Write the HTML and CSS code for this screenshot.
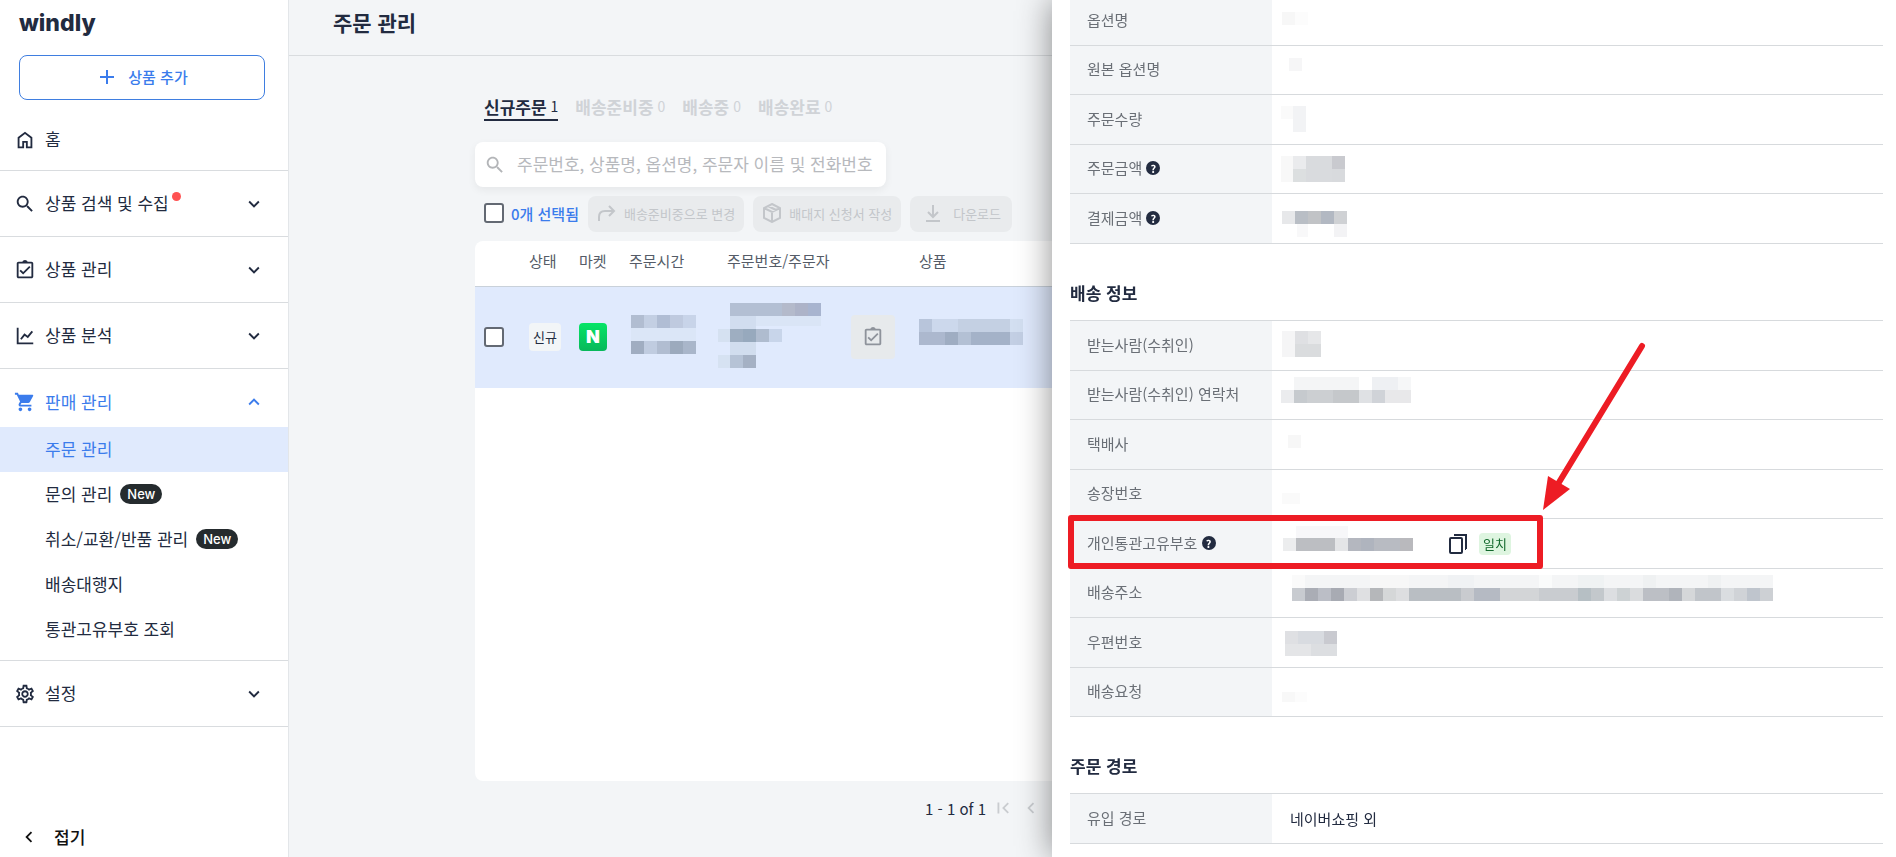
FILE: index.html
```html
<!DOCTYPE html>
<html lang="ko">
<head>
  <meta charset="UTF-8" />
  <meta name="viewport" content="width=device-width, initial-scale=1.0" />
  <title>주문 관리 - windly</title>
  <link rel="stylesheet" href="styles.css">
</head>
<body>
  <!-- Shared icons -->
  <svg class="sprite" aria-hidden="true">
    <symbol id="i-down" viewBox="0 0 24 24"><path d="M16.59 8.59 12 13.17 7.41 8.59 6 10l6 6 6-6z"/></symbol>
    <symbol id="i-search" viewBox="0 0 24 24"><path d="M15.5 14h-.79l-.28-.27C15.41 12.59 16 11.11 16 9.5 16 5.91 13.09 3 9.5 3S3 5.91 3 9.5 5.91 16 9.5 16c1.61 0 3.09-.59 4.23-1.57l.27.28v.79l5 4.99L20.49 19l-4.99-5zm-6 0C7.01 14 5 11.99 5 9.5S7.01 5 9.5 5 14 7.01 14 9.5 11.99 14 9.5 14z"/></symbol>
    <symbol id="i-clip" viewBox="0 0 24 24"><path d="M19 3h-4.18C14.4 1.84 13.3 1 12 1s-2.4.84-2.82 2H5c-1.1 0-2 .9-2 2v14c0 1.1.9 2 2 2h14c1.1 0 2-.9 2-2V5c0-1.1-.9-2-2-2zm0 16H5V5h14v14zM17.99 9l-1.41-1.42-6.59 6.59-2.58-2.57-1.42 1.41 4 3.99z"/></symbol>
    <symbol id="i-left" viewBox="0 0 24 24"><path d="M15.41 7.41 14 6l-6 6 6 6 1.41-1.41L10.83 12z"/></symbol>
  </svg>

  <div class="layout">
    <aside class="sidebar">
      <a class="logo" href="#">windly</a>
      <button class="add-btn" type="button">
        <svg viewBox="0 0 14 14"><path d="M7 0v14M0 7h14"/></svg>
        상품 추가
      </button>

      <nav class="nav">
        <div class="nav-section home">
          <a class="nav-item" href="#">
            <svg class="icon" viewBox="0 0 24 24"><path d="M6 19h3v-6h6v6h3v-9l-6-4.5L6 10v9zm-2 2V9l8-6 8 6v12h-7v-6h-2v6H4z"/></svg>
            <span>홈</span>
          </a>
        </div>
        <div class="nav-section">
          <button class="nav-item" type="button">
            <svg class="icon"><use href="#i-search"/></svg>
            <span class="dot">상품 검색 및 수집</span>
            <svg class="icon arrow"><use href="#i-down"/></svg>
          </button>
        </div>
        <div class="nav-section">
          <button class="nav-item" type="button">
            <svg class="icon"><use href="#i-clip"/></svg>
            <span>상품 관리</span>
            <svg class="icon arrow"><use href="#i-down"/></svg>
          </button>
        </div>
        <div class="nav-section">
          <button class="nav-item" type="button">
            <svg class="icon line" viewBox="0 0 24 24"><path d="M4 3v17h17M7.500 15.500l4-5 3.500 2.500 5-6"/></svg>
            <span>상품 분석</span>
            <svg class="icon arrow"><use href="#i-down"/></svg>
          </button>
        </div>
        <div class="nav-section">
          <button class="nav-item open" type="button">
            <svg class="icon" viewBox="0 0 24 24"><path d="M7 18c-1.100 0-1.990.9-1.990 2S5.900 22 7 22s2-.9 2-2-.9-2-2-2zM1 2v2h2l3.600 7.590-1.350 2.450c-.16.28-.25.61-.25.96 0 1.100.9 2 2 2h12v-2H7.420c-.14 0-.25-.11-.25-.25l.03-.12.9-1.630h7.450c.75 0 1.410-.41 1.750-1.030l3.580-6.490c.08-.14.12-.31.12-.48 0-.55-.45-1-1-1H5.210l-.94-2H1zm16 16c-1.100 0-1.990.9-1.990 2s.89 2 1.990 2 2-.9 2-2-.9-2-2-2z"/></svg>
            <span>판매 관리</span>
            <svg class="icon arrow" viewBox="0 0 24 24"><path d="m12 8-6 6 1.410 1.410L12 10.830l4.590 4.580L18 14z"/></svg>
          </button>
          <ul class="submenu">
            <li><a class="active" href="#">주문 관리</a></li>
            <li><a href="#">문의 관리 <span class="new">New</span></a></li>
            <li><a href="#">취소/교환/반품 관리 <span class="new">New</span></a></li>
            <li><a href="#">배송대행지</a></li>
            <li><a href="#">통관고유부호 조회</a></li>
          </ul>
        </div>
        <div class="nav-section">
          <button class="nav-item" type="button">
            <svg class="icon" viewBox="0 0 24 24"><path d="M19.43 12.98c.04-.32.07-.64.07-.98 0-.34-.03-.66-.07-.98l2.110-1.650c.19-.15.24-.42.12-.64l-2-3.460c-.09-.16-.26-.25-.44-.25-.06 0-.12.01-.17.03l-2.490 1c-.52-.4-1.080-.73-1.690-.98l-.38-2.650C14.46 2.180 14.25 2 14 2h-4c-.25 0-.46.18-.49.42l-.38 2.650c-.61.25-1.170.59-1.690.98l-2.490-1c-.06-.02-.12-.03-.18-.03-.17 0-.34.09-.43.25l-2 3.460c-.13.22-.07.49.12.64l2.110 1.650c-.04.32-.07.65-.07.98 0 .33.03.66.07.98l-2.110 1.650c-.19.15-.24.42-.12.64l2 3.460c.09.16.26.25.44.25.06 0 .12-.01.17-.03l2.490-1c.52.4 1.080.73 1.690.98l.38 2.650c.03.24.24.42.49.42h4c.25 0 .46-.18.49-.42l.38-2.650c.61-.25 1.170-.59 1.690-.98l2.490 1c.06.02.12.03.18.03.17 0 .34-.09.43-.25l2-3.460c.12-.22.07-.49-.12-.64l-2.110-1.650zm-1.980-1.710c.04.31.05.52.05.73 0 .21-.02.43-.05.73l-.14 1.130.89.7 1.080.84-.7 1.210-1.270-.51-1.040-.42-.9.68c-.43.32-.84.56-1.250.73l-1.060.43-.16 1.130-.2 1.350h-1.400l-.19-1.350-.16-1.130-1.060-.43c-.43-.18-.83-.41-1.230-.71l-.91-.7-1.060.43-1.270.51-.7-1.210 1.080-.84.89-.7-.14-1.130c-.03-.31-.05-.54-.05-.74s.02-.43.05-.73l.14-1.130-.89-.7-1.080-.84.7-1.210 1.270.51 1.040.42.9-.68c.43-.32.84-.56 1.250-.73l1.060-.43.16-1.130.2-1.350h1.390l.19 1.350.16 1.130 1.060.43c.43.18.83.41 1.230.71l.91.7 1.060-.43 1.270-.51.7 1.210-1.070.85-.89.7.14 1.130zM12 8c-2.210 0-4 1.790-4 4s1.790 4 4 4 4-1.790 4-4-1.790-4-4-4zm0 6c-1.100 0-2-.9-2-2s.9-2 2-2 2 .9 2 2-.9 2-2 2z"/></svg>
            <span>설정</span>
            <svg class="icon arrow"><use href="#i-down"/></svg>
          </button>
        </div>
      </nav>

      <button class="collapse" type="button">
        <svg class="icon"><use href="#i-left"/></svg>
        접기
      </button>
    </aside>

    <main class="main">
      <header class="topbar"><h1>주문 관리</h1></header>

      <div class="content">
        <div class="tabs">
          <a class="tab active" href="#">신규주문 <span>1</span></a>
          <a class="tab" href="#">배송준비중 <span>0</span></a>
          <a class="tab" href="#">배송중 <span>0</span></a>
          <a class="tab" href="#">배송완료 <span>0</span></a>
        </div>

        <div class="search">
          <svg class="icon"><use href="#i-search"/></svg>
          <input type="text" aria-label="주문 검색" placeholder="주문번호, 상품명, 옵션명, 주문자 이름 및 전화번호" />
        </div>

        <div class="actions">
          <label class="select-all"><input type="checkbox" class="check" /> 0개 선택됨</label>
          <button type="button" disabled>
            <svg viewBox="0 0 20 20"><path d="M2 18v-4c0-4 2-6 6-6h9M12 3l5 5-5 5"/></svg>
            배송준비중으로 변경
          </button>
          <button type="button" disabled>
            <svg viewBox="0 0 20 20"><path d="M10 1l8 4v10l-8 4-8-4V5zM2 5l8 4 8-4M10 9v10M6 3l8 4"/></svg>
            배대지 신청서 작성
          </button>
          <button type="button" class="download" disabled>
            <svg viewBox="0 0 20 20"><path d="M10 2v11M5 9l5 5 5-5M3 18h14"/></svg>
            다운로드
          </button>
        </div>

        <div class="card">
          <table class="orders">
            <colgroup>
              <col class="c-check"><col class="c-state"><col class="c-state"><col class="c-time"><col class="c-order"><col class="c-memo"><col>
            </colgroup>
            <thead>
              <tr><th></th><th>상태</th><th>마켓</th><th>주문시간</th><th class="indent">주문번호/주문자</th><th></th><th>상품</th></tr>
            </thead>
            <tbody>
              <tr>
                <td><input type="checkbox" class="check row-check" aria-label="주문 선택" /></td>
                <td><span class="state">신규</span></td>
                <td><span class="market">N</span></td>
                <td>
                  <svg class="mosaic" width="67" height="100">
                    <rect x="2" y="28" width="13" height="13" fill="#b1bdd1"/><rect x="15" y="28" width="13" height="13" fill="#c3cfe3"/><rect x="28" y="28" width="13" height="13" fill="#b0bdd4"/><rect x="41" y="28" width="13" height="13" fill="#bfcadf"/><rect x="54" y="28" width="13" height="13" fill="#c8d4e9"/>
                    <rect x="2" y="41" width="65" height="13" fill="#dbe6f7"/>
                    <rect x="2" y="54" width="13" height="13" fill="#a0adc1"/><rect x="15" y="54" width="13" height="13" fill="#c0cce0"/><rect x="28" y="54" width="13" height="13" fill="#b1bdd1"/><rect x="41" y="54" width="13" height="13" fill="#9caabd"/><rect x="54" y="54" width="13" height="13" fill="#a9b6ca"/>
                  </svg>
                </td>
                <td>
                  <svg class="mosaic" width="104" height="100">
                    <rect x="12" y="16" width="52" height="13" fill="#b3bfd3"/><rect x="64" y="16" width="13" height="13" fill="#b4bacb"/><rect x="77" y="16" width="14" height="13" fill="#adb3c8"/><rect x="90" y="16" width="13" height="13" fill="#a8b4cf"/>
                    <rect x="12" y="29" width="26" height="13" fill="#d1ddef"/><rect x="38" y="29" width="65" height="10" fill="#dae5f6"/>
                    <rect x="0" y="42" width="12" height="13" fill="#d5e1f1"/><rect x="12" y="42" width="13" height="13" fill="#9eaec1"/><rect x="25" y="42" width="13" height="13" fill="#97a9bd"/><rect x="38" y="42" width="13" height="13" fill="#afbccf"/><rect x="51" y="42" width="13" height="13" fill="#c8d5ea"/>
                    <rect x="12" y="55" width="26" height="13" fill="#d1ddee"/>
                    <rect x="0" y="68" width="12" height="13" fill="#d6e2f2"/><rect x="12" y="68" width="13" height="13" fill="#b6c3d6"/><rect x="25" y="68" width="13" height="13" fill="#a5b1c4"/>
                  </svg>
                </td>
                <td><button class="memo" type="button" aria-label="주문 확인"><svg class="icon"><use href="#i-clip"/></svg></button></td>
                <td>
                  <svg class="mosaic" width="104" height="100">
                    <rect x="0" y="32" width="13" height="13" fill="#b8c5db"/><rect x="13" y="32" width="26" height="13" fill="#ccd8ec"/><rect x="39" y="32" width="52" height="13" fill="#c4d0e3"/><rect x="91" y="32" width="13" height="13" fill="#d3dff1"/>
                    <rect x="0" y="45" width="26" height="13" fill="#acb8ce"/><rect x="26" y="45" width="13" height="13" fill="#9fadc2"/><rect x="39" y="45" width="13" height="13" fill="#b3c0d4"/><rect x="52" y="45" width="39" height="13" fill="#a4b2c8"/><rect x="91" y="45" width="13" height="13" fill="#c3cfe4"/>
                  </svg>
                </td>
              </tr>
            </tbody>
          </table>
        </div>

        <div class="pager">
          <span>1 - 1 of 1</span>
          <button type="button" aria-label="첫 페이지" disabled><svg class="icon" viewBox="0 0 24 24"><path d="M18.410 16.590 13.820 12l4.590-4.590L17 6l-6 6 6 6zM6 6h2v12H6z"/></svg></button>
          <button type="button" aria-label="이전 페이지" disabled><svg class="icon"><use href="#i-left"/></svg></button>
        </div>
      </div>
    </main>
  </div>

  <!-- Order detail drawer -->
  <section class="drawer">
    <table class="info first">
      <tr><th>옵션명</th><td><svg class="mosaic" width="40" height="48"><rect x="1" y="15" width="13" height="13" fill="#f7f7f7"/><rect x="14" y="15" width="13" height="13" fill="#fcfcfc"/></svg></td></tr>
      <tr><th>원본 옵션명</th><td><svg class="mosaic" width="40" height="48"><rect x="8" y="12" width="13" height="13" fill="#f6f6f7"/></svg></td></tr>
      <tr><th>주문수량</th><td><svg class="mosaic" width="40" height="48"><rect x="0" y="10" width="12" height="13" fill="#fafafa"/><rect x="12" y="10" width="13" height="26" fill="#f2f3f5"/></svg></td></tr>
      <tr><th>주문금액 <span class="help">?</span></th><td><svg class="mosaic" width="66" height="48"><rect x="0" y="11" width="12" height="26" fill="#f8f8f8"/><rect x="12" y="11" width="13" height="13" fill="#eaebed"/><rect x="12" y="24" width="13" height="13" fill="#dcdfe0"/><rect x="25" y="11" width="26" height="26" fill="#d9dbde"/><rect x="51" y="11" width="13" height="13" fill="#c9cacf"/><rect x="51" y="24" width="13" height="13" fill="#d8dadd"/></svg></td></tr>
      <tr><th>결제금액 <span class="help">?</span></th><td><svg class="mosaic" width="68" height="48"><rect x="1" y="16" width="13" height="13" fill="#e7e8ea"/><rect x="14" y="16" width="13" height="13" fill="#b9bec5"/><rect x="27" y="16" width="13" height="13" fill="#c1c3c6"/><rect x="40" y="16" width="13" height="13" fill="#b2b8c2"/><rect x="53" y="16" width="13" height="13" fill="#cfd1d4"/><rect x="16" y="29" width="11" height="13" fill="#f8f8f9"/><rect x="53" y="29" width="13" height="13" fill="#f3f3f5"/></svg></td></tr>
    </table>

    <h2>배송 정보</h2>
    <table class="info">
      <tr><th>받는사람(수취인)</th><td><svg class="mosaic" width="42" height="48"><rect x="1" y="9" width="13" height="26" fill="#f5f5f6"/><rect x="14" y="9" width="13" height="13" fill="#dfe0e3"/><rect x="27" y="9" width="13" height="13" fill="#e6e7e9"/><rect x="14" y="22" width="26" height="13" fill="#dadcde"/></svg></td></tr>
      <tr><th>받는사람(수취인) 연락처</th><td><svg class="mosaic" width="130" height="48"><rect x="13" y="6" width="65" height="13" fill="#f4f5f6"/><rect x="91" y="6" width="26" height="13" fill="#eef0f3"/><rect x="117" y="6" width="13" height="13" fill="#f6f7f8"/><rect x="0" y="19" width="13" height="13" fill="#ebecee"/><rect x="13" y="19" width="13" height="13" fill="#c6cace"/><rect x="26" y="19" width="26" height="13" fill="#cccfd2"/><rect x="52" y="19" width="26" height="13" fill="#c5c8cb"/><rect x="78" y="19" width="13" height="13" fill="#dfe1e4"/><rect x="91" y="19" width="13" height="13" fill="#d0d3d8"/><rect x="104" y="19" width="26" height="13" fill="#e8e8ea"/></svg></td></tr>
      <tr><th>택배사</th><td><svg class="mosaic" width="40" height="48"><rect x="7" y="14" width="13" height="13" fill="#f7f7f7"/></svg></td></tr>
      <tr><th>송장번호</th><td><svg class="mosaic" width="40" height="48"><rect x="1" y="23" width="18" height="11" fill="#fafafa"/></svg></td></tr>
      <tr><th>개인통관고유부호 <span class="help">?</span></th><td>
        <div class="customs">
          <svg class="mosaic" width="132" height="48"><rect x="15" y="6" width="52" height="12" fill="#f7f7f9"/><rect x="2" y="18" width="13" height="13" fill="#ecedee"/><rect x="15" y="18" width="39" height="13" fill="#bcbec2"/><rect x="54" y="18" width="13" height="13" fill="#e4e5e7"/><rect x="67" y="18" width="13" height="13" fill="#b4b7bf"/><rect x="80" y="18" width="13" height="13" fill="#afb4be"/><rect x="93" y="18" width="26" height="13" fill="#b8bbc2"/><rect x="119" y="18" width="13" height="13" fill="#b9b9bd"/></svg>
          <button class="copy" type="button" aria-label="복사"><svg viewBox="0 0 18 20"><path d="M5 1h12v14M2 4h10a1 1 0 0 1 1 1v13a1 1 0 0 1-1 1H2a1 1 0 0 1-1-1V5a1 1 0 0 1 1-1zM17 15h-1"/></svg></button>
          <span class="match">일치</span>
        </div>
      </td></tr>
      <tr><th>배송주소</th><td><svg class="mosaic" width="492" height="48">
        <rect x="11" y="6" width="13" height="13" fill="#fafafa"/><rect x="24" y="6" width="468" height="13" fill="#f4f5f6"/><rect x="89" y="6" width="39" height="13" fill="#f7f7f7"/><rect x="167" y="6" width="26" height="13" fill="#f0f2f4"/><rect x="258" y="6" width="13" height="13" fill="#fafbfb"/><rect x="297" y="6" width="26" height="13" fill="#eff2f3"/><rect x="362" y="6" width="13" height="13" fill="#eff1f2"/><rect x="427" y="6" width="13" height="13" fill="#eff1f2"/>
        <rect x="11" y="19" width="13" height="13" fill="#c8cbd0"/><rect x="24" y="19" width="13" height="13" fill="#aaadb5"/><rect x="37" y="19" width="13" height="13" fill="#bbbec6"/><rect x="50" y="19" width="13" height="13" fill="#a8abb3"/><rect x="63" y="19" width="13" height="13" fill="#ccced3"/><rect x="76" y="19" width="13" height="13" fill="#dfe0e2"/><rect x="89" y="19" width="13" height="13" fill="#b5b7ba"/><rect x="102" y="19" width="13" height="13" fill="#d5d7d8"/><rect x="115" y="19" width="13" height="13" fill="#dddee0"/><rect x="128" y="19" width="52" height="13" fill="#b9bec3"/><rect x="180" y="19" width="13" height="13" fill="#c9cbcf"/><rect x="193" y="19" width="26" height="13" fill="#b5bac3"/><rect x="219" y="19" width="39" height="13" fill="#d3d5d7"/><rect x="258" y="19" width="39" height="13" fill="#c9ccd0"/><rect x="297" y="19" width="13" height="13" fill="#b6bfc4"/><rect x="310" y="19" width="13" height="13" fill="#c3c8cc"/><rect x="323" y="19" width="13" height="13" fill="#dcdee1"/><rect x="336" y="19" width="13" height="13" fill="#cdd2d4"/><rect x="349" y="19" width="13" height="13" fill="#dadcde"/><rect x="362" y="19" width="26" height="13" fill="#bcbfc5"/><rect x="388" y="19" width="13" height="13" fill="#b0b4bb"/><rect x="401" y="19" width="13" height="13" fill="#d5d7d9"/><rect x="414" y="19" width="26" height="13" fill="#c1c5ca"/><rect x="440" y="19" width="13" height="13" fill="#dadde0"/><rect x="453" y="19" width="13" height="13" fill="#d0d3d7"/><rect x="466" y="19" width="13" height="13" fill="#bfc5cd"/><rect x="479" y="19" width="13" height="13" fill="#cdd0d4"/>
      </svg></td></tr>
      <tr><th>우편번호</th><td><svg class="mosaic" width="56" height="48"><rect x="4" y="12" width="13" height="13" fill="#dfe0e3"/><rect x="17" y="12" width="26" height="13" fill="#d8dbe0"/><rect x="43" y="12" width="13" height="13" fill="#c9cad0"/><rect x="4" y="25" width="26" height="12" fill="#e4e5e7"/><rect x="30" y="25" width="26" height="12" fill="#dcdee1"/></svg></td></tr>
      <tr><th>배송요청</th><td><svg class="mosaic" width="40" height="48"><rect x="1" y="24" width="13" height="10" fill="#f8f8f8"/><rect x="14" y="24" width="12" height="10" fill="#fcfcfc"/></svg></td></tr>
    </table>

    <h2>주문 경로</h2>
    <table class="info">
      <tr><th>유입 경로</th><td><span class="value">네이버쇼핑 외</span></td></tr>
    </table>

    <!-- Guide marks over the customs code row -->
    <svg class="marks" width="600" height="234" aria-hidden="true">
      <rect x="3" y="178" width="469" height="48"/>
      <path class="shaft" d="M574 6 490 144"/>
      <path class="head" d="M475 170 480 136 502 149z"/>
    </svg>
  </section>
</body>
</html>
```
FILE: styles.css
```css
* {
  box-sizing: border-box;
}
body {
  margin: 0;
  height: 100vh;
  overflow: hidden;
  font-family: "Noto Sans CJK KR", "Noto Sans", sans-serif;
  font-size: 17px;
  color: #222b40;
  background: #f3f5f7;
}
a {
  color: inherit;
  text-decoration: none;
}
button {
  font: inherit;
  color: inherit;
  border: none;
  background: none;
  padding: 0;
  cursor: pointer;
}
svg {
  display: block;
  flex: none;
}
.sprite {
  position: absolute;
  width: 0;
  height: 0;
}
.icon {
  width: 22px;
  height: 22px;
  fill: currentColor;
}
.icon.line {
  fill: none;
  stroke: currentColor;
  stroke-width: 2;
}
.layout {
  display: flex;
  height: 100%;
}

/* Sidebar */
.sidebar {
  width: 289px;
  flex: none;
  display: flex;
  flex-direction: column;
  background: #fff;
  border-right: 1px solid #e3e6e9;
}
.logo {
  padding: 8px 19px 0;
  font-family: Inter, sans-serif;
  font-size: 23px;
  font-weight: 800;
  line-height: 30px;
}
.add-btn {
  display: flex;
  align-items: center;
  justify-content: center;
  gap: 14px;
  height: 45px;
  margin: 17px 23px 7px 19px;
  padding: 0 0 2px 4px;
  border: 1px solid #3f7ee0;
  border-radius: 8px;
  color: #3b7cec;
  font-size: 15px;
  font-weight: 500;
}
.add-btn svg {
  width: 14px;
  height: 14px;
  stroke: currentColor;
  stroke-width: 2;
}
.nav-section {
  padding: 8px 0;
  border-bottom: 1px solid #d9dcdf;
}
.nav-section.home {
  padding-bottom: 6px;
}
.nav-item {
  display: flex;
  align-items: center;
  gap: 9px;
  width: 100%;
  height: 49px;
  padding: 0 23px 0 14px;
}
.nav-item span {
  margin-bottom: 2px;
}
.nav-item.open {
  height: 50px;
  color: #3b7cec;
}
.arrow {
  margin-left: auto;
}
.dot {
  position: relative;
}
.dot::after {
  content: "";
  position: absolute;
  top: 2px;
  right: -12px;
  width: 9px;
  height: 9px;
  border-radius: 50%;
  background: #ff5252;
}
.submenu {
  list-style: none;
  margin: 0;
  padding: 0;
}
.submenu a {
  display: flex;
  align-items: center;
  gap: 8px;
  height: 45px;
  padding: 0 0 2px 45px;
}
.submenu .active {
  color: #3b7cec;
  background: #e0eafd;
}
.new {
  padding: 0 7px;
  border-radius: 10px;
  background: #252b2e;
  color: #fff;
  font-family: Inter, sans-serif;
  font-size: 13px;
  font-weight: 500;
  line-height: 20px;
}
.collapse {
  display: flex;
  align-items: center;
  gap: 14px;
  height: 40px;
  margin-top: auto;
  padding: 0 0 1px 18px;
  color: #111;
  font-weight: 500;
}

/* Orders */
.main {
  flex: 1;
  min-width: 0;
}
.topbar {
  height: 56px;
  padding: 6px 44px;
  border-bottom: 1px solid #d9dcdf;
}
h1 {
  margin: 0;
  font-size: 21px;
  font-weight: 700;
  line-height: 32px;
}
.content {
  max-width: 1235px;
  margin: 0 auto;
  padding-top: 38px;
}
.tabs {
  display: flex;
  gap: 17px;
  padding: 0 9px;
}
.tab {
  display: flex;
  align-items: center;
  gap: 4px;
  height: 27px;
  padding-bottom: 1px;
  border-bottom: 2px solid transparent;
  color: #d0d3d7;
  font-weight: 700;
}
.tab span {
  font-size: 14px;
  font-weight: 400;
}
.tab.active {
  color: #222b40;
  border-color: #222b40;
}
.search {
  display: flex;
  align-items: center;
  gap: 11px;
  width: 411px;
  height: 45px;
  margin-top: 21px;
  padding: 0 9px;
  border-radius: 8px;
  background: #fff;
  box-shadow: 0 3px 8px rgba(0, 0, 0, 0.06);
  color: #b3b5b8;
}
.search input {
  flex: 1;
  min-width: 0;
  padding: 0 0 2px;
  border: none;
  outline: none;
  background: none;
  font: inherit;
}
.search input::placeholder {
  color: #b7b9bd;
}
.actions {
  display: flex;
  gap: 9px;
  margin: 9px 0;
  padding-left: 9px;
}
.select-all {
  display: flex;
  align-items: center;
  gap: 7px;
  padding-bottom: 2px;
  color: #3b7cec;
  font-size: 15px;
  font-weight: 500;
}
.check {
  appearance: none;
  width: 20px;
  height: 20px;
  margin: 0;
  border: 2px solid #636973;
  border-radius: 3px;
  background: #fff;
}
.actions button {
  display: flex;
  align-items: center;
  gap: 7px;
  height: 36px;
  padding: 0 9px 2px;
  border-radius: 8px;
  background: #e9ebed;
  color: #c3c6ca;
  font-size: 13px;
}
.actions button svg {
  width: 20px;
  height: 20px;
  fill: none;
  stroke: currentColor;
  stroke-width: 2;
}
.actions .download {
  gap: 10px;
  padding: 0 11px 2px 13px;
}
.card {
  height: 540px;
  overflow: hidden;
  border-radius: 8px;
  background: #fff;
}
.orders {
  width: 100%;
  table-layout: fixed;
  border-collapse: collapse;
}
.c-check {
  width: 54px;
}
.c-state {
  width: 50px;
}
.c-time {
  width: 89px;
}
.c-order {
  width: 133px;
}
.c-memo {
  width: 68px;
}
.orders th {
  height: 45px;
  padding: 0 0 5px;
  border-bottom: 1px solid #c9d1da;
  color: #555c68;
  font-size: 15px;
  font-weight: 400;
  text-align: left;
}
.orders .indent {
  padding-left: 9px;
}
.orders td {
  height: 101px;
  padding: 0 0 1px;
  background: #e0eafd;
}
.row-check {
  display: block;
  margin-left: 9px;
}
.state {
  display: inline-block;
  padding: 0 4px;
  border-radius: 4px;
  background: #f2f5f7;
  font-size: 13px;
  line-height: 28px;
}
.market {
  display: block;
  width: 28px;
  border-radius: 4px;
  background: linear-gradient(#07e566, #08b85a);
  color: #fff;
  font-family: Inter, sans-serif;
  font-size: 18px;
  font-weight: 900;
  line-height: 28px;
  text-align: center;
}
.memo {
  display: flex;
  align-items: center;
  justify-content: center;
  width: 44px;
  height: 44px;
  border-radius: 4px;
  background: #e7eaec;
  color: #8e939b;
}
.pager {
  display: flex;
  align-items: center;
  gap: 6px;
  height: 54px;
  padding-left: 450px;
  font-size: 15px;
}
.pager button {
  color: #c9ccd0;
}

/* Detail drawer */
.drawer {
  position: fixed;
  top: 0;
  right: 0;
  bottom: 0;
  left: 1052px;
  padding: 0 13px 0 18px;
  background: #fff;
  box-shadow: 0 0 32px rgba(0, 0, 0, 0.45);
}
.info {
  width: 100%;
  border-collapse: collapse;
  border-top: 1px solid #d7dadd;
  font-size: 15px;
}
.info.first {
  margin-top: -5px;
}
.info th,
.info td {
  height: 50px;
  padding: 0;
  border-bottom: 1px solid #d7dadd;
}
.info tr:nth-child(even) > * {
  height: 49px;
}
.info th {
  width: 202px;
  padding: 0 0 3px 17px;
  background: #f3f5f7;
  color: #6a6f76;
  font-weight: 400;
  text-align: left;
}
.info td {
  padding-left: 9px;
}
.value {
  padding-left: 9px;
}
h2 {
  margin: 0;
  padding: 36px 0 14px;
  font-size: 17px;
  font-weight: 700;
  line-height: 26px;
}
.help {
  display: inline-block;
  width: 14px;
  border-radius: 50%;
  background: #222b40;
  color: #fff;
  font-size: 11px;
  font-weight: 700;
  line-height: 14px;
  text-align: center;
  vertical-align: 1px;
}
.customs {
  display: flex;
  align-items: center;
}
.copy {
  margin: 0 12px 0 36px;
}
.copy svg {
  width: 18px;
  height: 20px;
  fill: none;
  stroke: #222b40;
  stroke-width: 2;
}
.match {
  padding: 0 4px;
  border-radius: 4px;
  background: #def5e0;
  color: #12682c;
  font-size: 13px;
  line-height: 22px;
}
.marks {
  position: absolute;
  top: 340px;
  left: 16px;
  fill: none;
  stroke: #ed1c24;
  stroke-width: 6;
  stroke-linejoin: round;
  stroke-linecap: round;
  pointer-events: none;
}
.marks .head {
  fill: #ed1c24;
  stroke: none;
}
```
